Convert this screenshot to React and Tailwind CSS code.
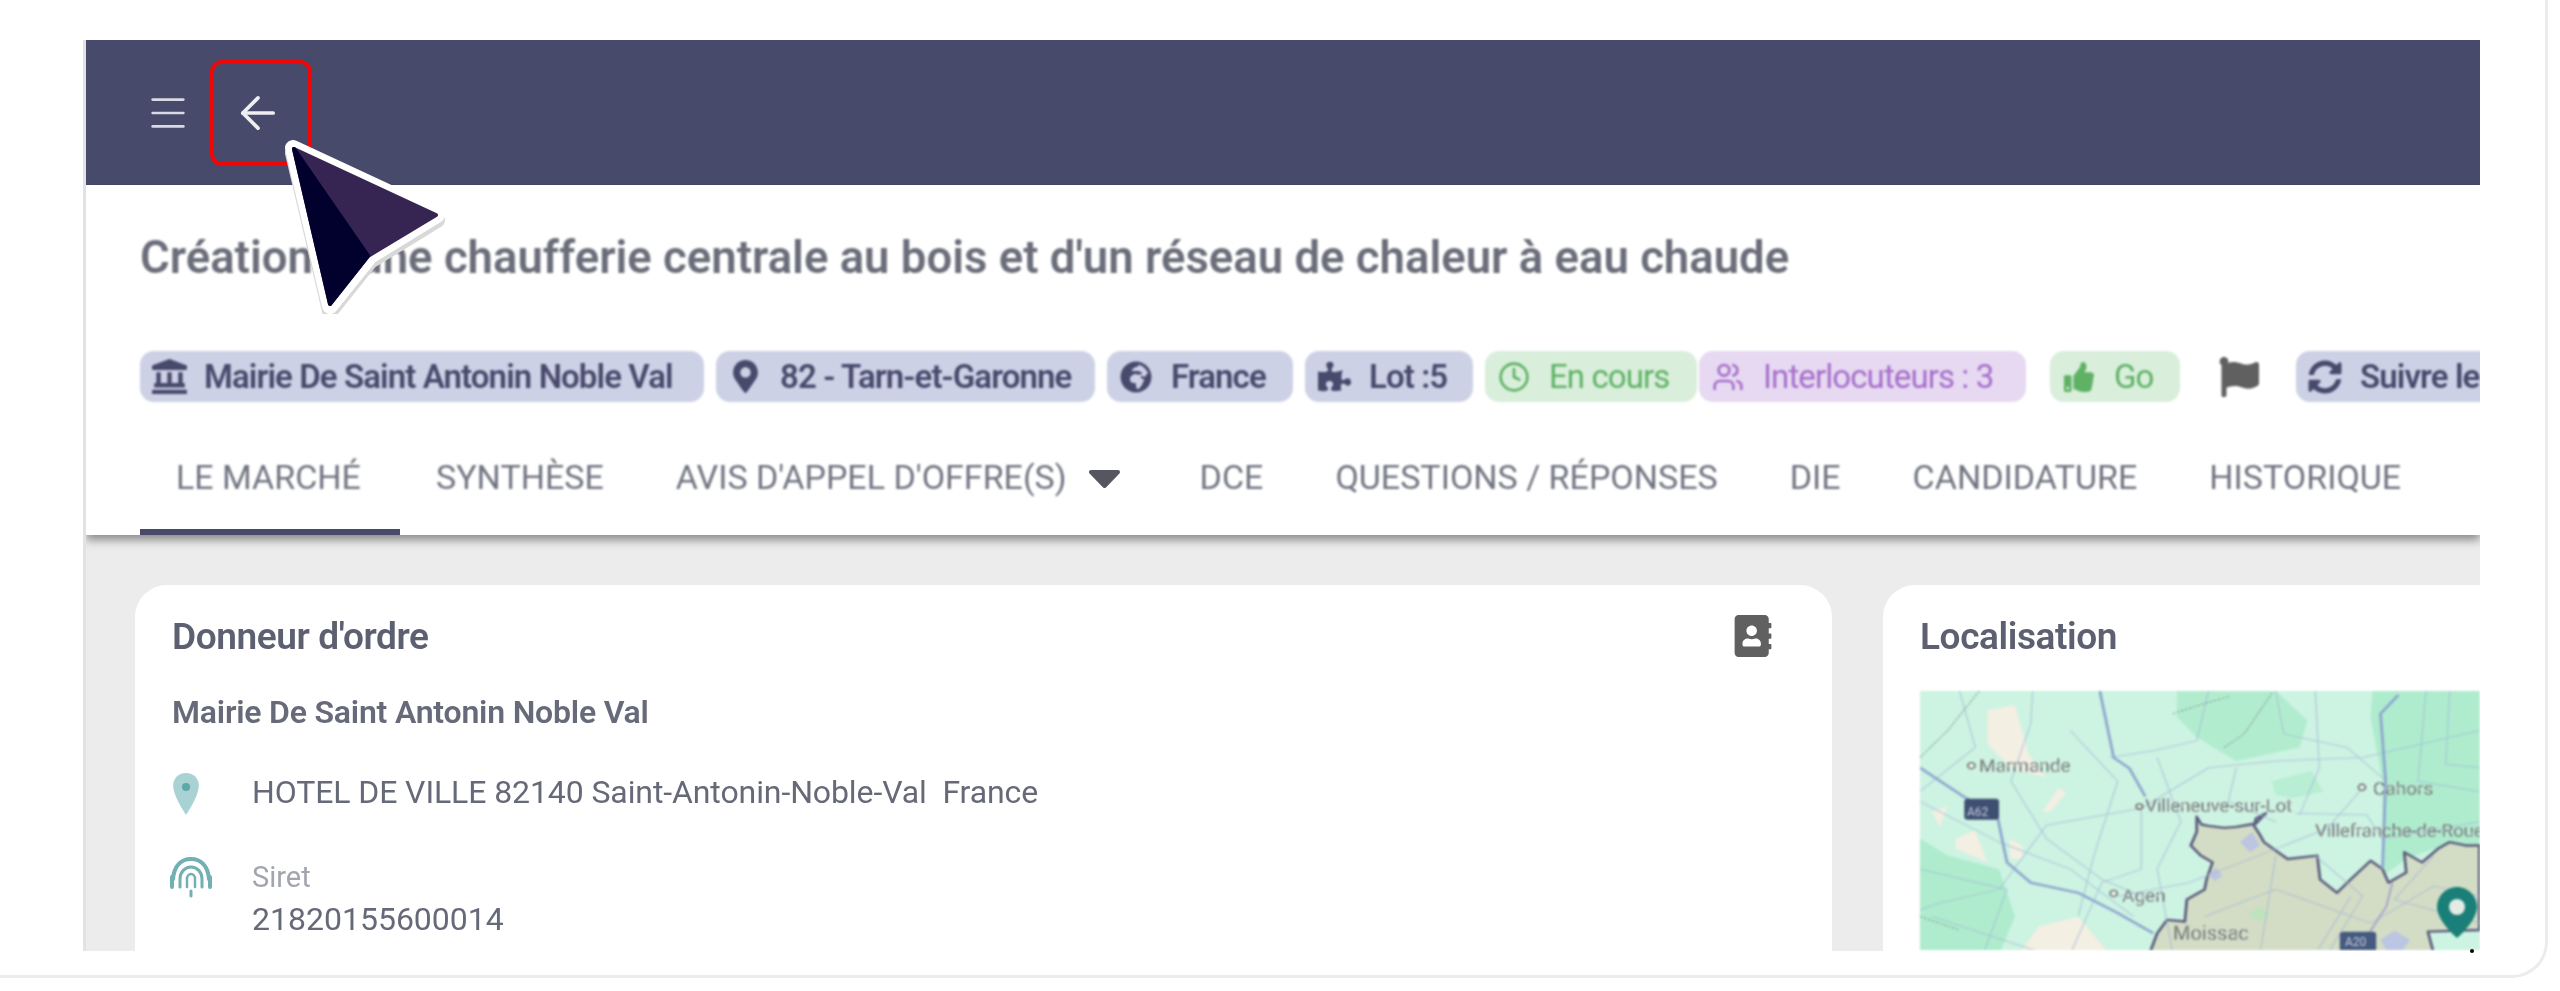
import React from "react";
import { Menu, ArrowLeft, Clock, Users } from "lucide-react";
import {
  FaLandmark,
  FaMapMarkerAlt,
  FaGlobeAfrica,
  FaPuzzlePiece,
  FaThumbsUp,
  FaFlag,
  FaSyncAlt,
  FaAddressBook,
} from "react-icons/fa";

const blueChips = [
  { label: "Mairie De Saint Antonin Noble Val", Icon: FaLandmark, width: "w-[564px]", iconClass: "text-[35px]" },
  { label: "82 - Tarn-et-Garonne", Icon: FaMapMarkerAlt, width: "w-[379px]", iconClass: "text-[33px]" },
  { label: "France", Icon: FaGlobeAfrica, width: "w-[186px]", iconClass: "text-[32px]" },
  { label: "Lot :5", Icon: FaPuzzlePiece, width: "w-[168px]", iconClass: "text-[33px]" },
];

const tabs = ["LE MARCHÉ", "SYNTHÈSE", "AVIS D'APPEL D'OFFRE(S)", "DCE", "QUESTIONS / RÉPONSES", "DIE", "CANDIDATURE", "HISTORIQUE"];

const Chip = ({ Icon, label, className, iconClass = "text-[30px]" }) => (
  <div className={`flex h-[51px] shrink-0 items-center gap-[17px] rounded-[14px] pl-[11px] text-[33px] tracking-[-0.9px] ${className}`}>
    <span className="flex w-[36px] shrink-0 justify-center">
      <Icon className={iconClass} />
    </span>
    <span className="whitespace-nowrap">{label}</span>
  </div>
);

const RoadMap = () => (
  <svg viewBox="0 0 560 259" preserveAspectRatio="none" className="block h-full w-full">
    <rect width="560" height="259" fill="#cdf3e2" />
    {/* shapes use coordinates taken from the crop */}
    <g transform="scale(0.3953 0.338) translate(-100 -33)" fill="none">
      <path d="M750 33H1000L1080 120 1060 200 900 240 800 170 750 110Z" fill="#b2eccf" />
      <path d="M1245 33H1515V500L1400 500 1330 530 1270 580 1270 300 1240 110Z" fill="#aeeccd" />
      <path d="M990 300 1090 270 1120 330 1040 350 1000 340Z" fill="#b8eed3" />
      <path d="M100 470 170 520 300 560 340 700 300 812H100Z" fill="#aeeccd" />
      <path d="M270 90 340 75 375 220 420 290 330 260 270 190Z" fill="#f3efe2" />
      <path d="M190 470 240 445 270 540 190 500Z" fill="#f3efe2" />
      <path d="M325 470 360 490 360 530 330 530Z" fill="#f3efe2" />
      <path d="M410 390 450 320 470 335 430 390Z" fill="#f3efe2" />
      <path d="M130 390 170 375 150 435Z" fill="#f3efe2" />
      <path d="M350 812 400 730 500 700 580 812Z" fill="#f3efe2" />
      <path
        d="M800 405 812 428 830 432 870 438 900 435 935 428 950 425 975 395 950 410 945 432 958 455 970 480 1000 505 1030 530 1105 520 1112 590 1155 630 1190 590 1240 535 1270 560 1285 600 1330 570 1325 510 1370 540 1410 500 1440 480 1480 490 1515 490 1515 740 1385 745 1400 812H680L700 750 725 710 770 715 775 650 820 620 825 590 840 540 810 520 785 490 800 450Z"
        fill="#d3dcc4"
        stroke="#5b5d7e"
        strokeWidth="7"
        strokeLinejoin="round"
      />
      <path d="M910 480 940 450 960 490 935 510Z" fill="#bcc5e2" />
      <path d="M830 575 850 555 865 580 845 595Z" fill="#bcc5e2" />
      <path d="M1265 770 1300 742 1340 770 1320 800 1280 800Z" fill="#bcc5e2" />
      <path d="M930 690 960 670 985 695 955 715Z" fill="#bfe3bf" />
      <g stroke="#a4bad8" strokeWidth="3" opacity="0.75">
        <path d="M100 360 300 480 480 560 640 700" />
        <path d="M385 33 380 130 330 300 420 470 560 590 680 650" />
        <path d="M660 380 420 430 300 620 150 660 100 680" />
        <path d="M660 380 660 560 560 600 480 812" />
        <path d="M660 380 830 260 1000 240 1220 230 1515 150" />
        <path d="M1050 395 1230 400 1270 470 1515 420" />
        <path d="M1220 320 1130 440 1000 500 780 600 600 640" />
        <path d="M830 33 800 180 690 210 580 230" />
        <path d="M1000 33 1020 160 1180 200 1280 300" />
        <path d="M1380 33 1360 300 1515 330" />
        <path d="M820 700 1000 620 1240 720 1400 610 1515 640" />
        <path d="M1000 520 960 812" />
        <path d="M1190 640 1100 812" />
        <path d="M100 560 320 620 260 812" />
        <path d="M130 700 420 812" />
        <path d="M480 150 600 300 540 520 500 700" />
        <path d="M700 230 760 420 700 560 740 812" />
        <path d="M900 260 880 360 1000 420" />
        <path d="M1100 33 1110 260 1060 400" />
        <path d="M1440 33 1430 250 1515 260" />
        <path d="M1100 520 1220 640 1130 812" />
        <path d="M1400 520 1300 650 1515 720" />
        <path d="M200 33 240 200 100 330" />
      </g>
      <g stroke="#8ea5cf" strokeWidth="7" strokeLinejoin="round">
        <path d="M100 260 210 345 295 400 320 540 380 600 500 630 600 690 690 750" />
        <path d="M555 33 590 230 630 262 670 345" />
        <path d="M1310 45 1265 100 1278 300 1270 560" />
        <path d="M1295 600 1280 670 1230 760" stroke="#a8a6cc" strokeWidth="5" />
      </g>
      <path d="M740 100 820 70 880 50M870 200 920 160 990 40" stroke="#7d998a" strokeWidth="3" strokeDasharray="6 5" />
      <path d="M100 230 170 150 250 33M100 700 200 740" stroke="#7d998a" strokeWidth="3" strokeDasharray="6 5" />
      <rect x="212" y="352" width="88" height="62" rx="9" fill="#3f4f72" />
      <rect x="1162" y="745" width="92" height="60" rx="9" fill="#46597e" />
      <circle cx="230" cy="254" r="9" fill="#e2f2ea" stroke="#666" strokeWidth="4" />
      <circle cx="1218" cy="318" r="9" fill="#e2f2ea" stroke="#666" strokeWidth="4" />
      <circle cx="590" cy="632" r="9" fill="#e2f2ea" stroke="#666" strokeWidth="4" />
      <circle cx="655" cy="375" r="8" fill="#e2f2ea" stroke="#666" strokeWidth="4" />
    </g>
    <g fontFamily="Roboto, sans-serif" fontSize="19" fill="#4f5157" stroke="#e6f5ec" strokeWidth="0.3">
      <text x="59" y="81">Marmande</text>
      <text x="225" y="121" letterSpacing="-0.2">Villeneuve-sur-Lot</text>
      <text x="453" y="104">Cahors</text>
      <text x="395" y="146" letterSpacing="-0.3">Villefranche-de-Rouergue</text>
      <text x="202" y="211">Agen</text>
      <text x="253" y="249" fontSize="20">Moissac</text>
    </g>
    <g fontFamily="Roboto, sans-serif" fontSize="12" fill="#c6cfdf">
      <text x="47" y="125">A62</text>
      <text x="425" y="255">A20</text>
    </g>
    <path d="M537 196c-11 0-20 9-20 20 0 14 20 31 20 31s20-17 20-31c0-11-9-20-20-20z" fill="#1a7f78" />
    <circle cx="537" cy="216" r="8" fill="#e4ece6" />
  </svg>
);

const App = () => {
  return (
    <div className="relative h-[991px] w-[2560px] overflow-hidden bg-white font-[Roboto,sans-serif]">
      <div className="h-[978px] w-[2548px] rounded-br-[36px] border-r-[3px] border-b-[3px] border-[#ececec] pt-[40px] pl-[83px]">
        <div className="flex h-[911px] w-[2397px] flex-col overflow-hidden border-l-[3px] border-[#e2e2e2]">
          {/* top bar */}
          <div className="flex h-[145px] shrink-0 items-center bg-[#474a6b] pl-[59px]">
            <Menu className="h-[46px] w-[46px] text-[#d9dae3] blur-[0.6px]" strokeWidth={1.4} />
            <div className="ml-[19px] flex h-[106px] w-[102px] items-center justify-center rounded-[12px] border-4 border-[#f00606]">
              <ArrowLeft className="h-[52px] w-[52px] -translate-x-[3px] text-[#eeeef3] blur-[0.5px]" strokeWidth={1.7} />
            </div>
          </div>

          {/* title, chips, tabs */}
          <div className="relative z-10 h-[350px] shrink-0 bg-white pl-[54px] shadow-[0_5px_9px_rgba(0,0,0,0.42)]">
            <h1 className="mt-[50px] text-[45.5px] leading-[46px] font-semibold whitespace-nowrap text-[#6b6e7a] blur-[0.8px]">
              Création d'une chaufferie centrale au bois et d'un réseau de chaleur à eau chaude
            </h1>
            <div className="mt-[70px] flex items-center font-semibold text-[#474a6b] blur-[0.8px]">
              {blueChips.map(({ label, Icon, width, iconClass }) => (
                <Chip key={label} label={label} Icon={Icon} iconClass={iconClass} className={`mr-[12px] bg-[#cdd1e6] ${width}`} />
              ))}
              <Chip label="En cours" Icon={Clock} className="w-[212px] bg-[#d9eedb] font-normal text-[#5fb265]" iconClass="h-[32px] w-[32px]" />
              <Chip label="Interlocuteurs : 3" Icon={Users} className="ml-[2px] w-[327px] bg-[#e7d9f1] font-normal text-[#a56fcb]" iconClass="h-[32px] w-[32px]" />
              <Chip label="Go" Icon={FaThumbsUp} className="ml-[24px] w-[130px] bg-[#d9eedb] font-normal text-[#5fb265]" />
              <FaFlag className="ml-[39px] shrink-0 text-[40px] text-[#606060]" />
              <Chip label="Suivre le marché" Icon={FaSyncAlt} className="ml-[37px] w-[260px] bg-[#cdd1e6]" iconClass="text-[34px]" />
            </div>
            <div className="mt-[23px] flex h-[110px] items-start text-[34px] leading-[104px] whitespace-nowrap text-[#707480]">
              {tabs.map((tab, i) => (
                <div key={tab} className={`flex h-[110px] items-start px-[36px] ${i === 0 ? "w-[260px] border-b-[6px] border-[#474a6b]" : ""}`}>
                  <span className="blur-[0.8px]">{tab}</span>
                  {i === 2 && (
                    <svg viewBox="0 0 33 20" className="mt-[44px] mr-[7px] ml-[21px] h-[20px] w-[33px] blur-[0.5px]">
                      <path d="M3 3h27L16.5 17z" fill="#55565f" stroke="#55565f" strokeWidth="4" strokeLinejoin="round" />
                    </svg>
                  )}
                </div>
              ))}
            </div>
          </div>

          {/* cards */}
          <div className="flex min-h-0 flex-1 gap-[51px] bg-[#ececec] pt-[50px] pl-[49px]">
            <div className="relative h-[500px] w-[1697px] shrink-0 rounded-[32px] bg-white pt-[32px] pl-[37px] text-[#666a78]">
              <div className="blur-[0.7px]">
                <h2 className="text-[37px] leading-[40px] font-semibold tracking-[-0.4px] text-[#5c6070]">Donneur d'ordre</h2>
                <p className="mt-[35px] text-[32px] leading-[40px] font-semibold tracking-[-0.2px] text-[#666a79]">Mairie De Saint Antonin Noble Val</p>
                <div className="mt-[36px] flex items-center">
                  <svg viewBox="0 0 24 36" className="mt-[4px] h-[42px] w-[28px] shrink-0">
                    <path d="M12 0C5 0 1 5 1 11c0 9 11 25 11 25s11-16 11-25C23 5 19 0 12 0z" fill="#a9d2d4" />
                    <circle cx="12" cy="12" r="3.5" fill="#5ea7ab" />
                  </svg>
                  <span className="ml-[52px] text-[32px] tracking-[-0.1px] whitespace-nowrap">HOTEL DE VILLE 82140 Saint-Antonin-Noble-Val&nbsp; France</span>
                </div>
                <div className="mt-[43px] flex">
                  {/* arches of the siret icon */}
                  <svg viewBox="0 0 44 44" className="h-[44px] w-[44px] shrink-0 -translate-x-[3px] -translate-y-[4px]" fill="none" stroke="#73b0b3" strokeLinecap="round">
                    <path d="M4 24C5 11 12 4 22 4s17 7 18 20" strokeWidth="4" />
                    <path d="M3 22v10M41 22v10" strokeWidth="4" />
                    <path d="M11 32V24c0-7 5-12 11-12s11 5 11 12v8" strokeWidth="3" />
                    <path d="M18 32v-8c0-3 2-5 4-5s4 2 4 5v8" strokeWidth="2.5" />
                    <path d="M22 36v5" strokeWidth="3" />
                  </svg>
                  <div className="ml-[36px]">
                    <div className="text-[29px] leading-[36px] text-[#a2a5ae]">Siret</div>
                    <div className="mt-[5px] text-[32px] leading-[38px]">21820155600014</div>
                  </div>
                </div>
              </div>
              <FaAddressBook className="absolute top-[30px] right-[58px] text-[42px] text-[#606060] blur-[0.5px]" />
            </div>
            <div className="h-[500px] w-[700px] shrink-0 rounded-[32px] bg-white pt-[32px] pl-[37px]">
              <h2 className="text-[37px] leading-[40px] font-semibold tracking-[-0.4px] text-[#5c6070] blur-[0.7px]">Localisation</h2>
              <div className="mt-[34px] h-[259px] w-[560px] blur-[1.2px]">
                <RoadMap />
              </div>
            </div>
          </div>
        </div>
      </div>

      {/* pointer overlay */}
      <svg viewBox="0 0 170 180" className="absolute top-[134px] left-[280px] z-20 h-[180px] w-[170px]">
        <path d="M13 14 157 81 90 122 50 172Z" fill="#d8d8d8" transform="translate(0 5)" stroke="#d8d8d8" strokeWidth="16" strokeLinejoin="round" />
        <path d="M13 14 157 81 90 122 50 172Z" fill="#ffffff" stroke="#ffffff" strokeWidth="16" strokeLinejoin="round" />
        <path d="M14 15 156 81 88 122 50 170Z" fill="#362552" stroke="#362552" strokeWidth="4" strokeLinejoin="round" />
        <path d="M14 15 88 122 50 170Z" fill="#02012e" stroke="#02012e" strokeWidth="4" strokeLinejoin="round" />
      </svg>
      <span className="absolute top-[949px] left-[2470px] h-[4px] w-[4px] rounded-full bg-black" />
    </div>
  );
};

export default App;
